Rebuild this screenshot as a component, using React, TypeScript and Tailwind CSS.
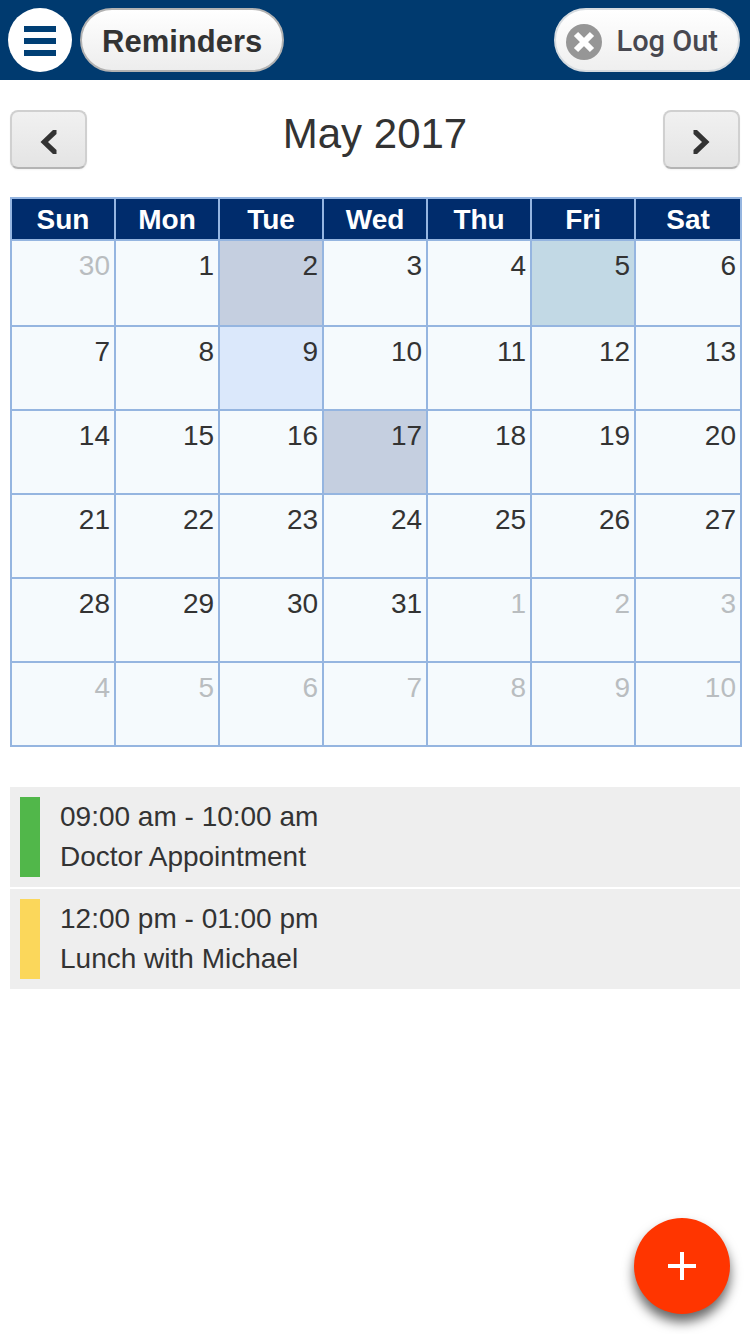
import { useState } from 'react';
import clsx from 'clsx';

const WEEKDAYS = ['Sun', 'Mon', 'Tue', 'Wed', 'Thu', 'Fri', 'Sat'];

// May 2017, padded with the days around it
const WEEKS = [
  [30, 1, 2, 3, 4, 5, 6],
  [7, 8, 9, 10, 11, 12, 13],
  [14, 15, 16, 17, 18, 19, 20],
  [21, 22, 23, 24, 25, 26, 27],
  [28, 29, 30, 31, 1, 2, 3],
  [4, 5, 6, 7, 8, 9, 10],
];

const REMINDERS = [
  { time: '09:00 am - 10:00 am', title: 'Doctor Appointment', color: 'bg-[#51b74a]' },
  { time: '12:00 pm - 01:00 pm', title: 'Lunch with Michael', color: 'bg-[#fbd75b]' },
];

const BUSY_DAYS = [2, 17];
const TODAY = 9;

function isOutside(week: number, day: number) {
  return (week === 0 && day > 7) || (week > 3 && day < 15);
}

function dayColor(day: number, outside: boolean, selected: number) {
  if (outside) return 'bg-[#f5fafd]';
  if (day === selected) return 'bg-[#c2d9e5]';
  if (day === TODAY) return 'bg-[#dbe8fb]';
  if (BUSY_DAYS.includes(day)) return 'bg-[#c5cfe0]';
  return 'bg-[#f5fafd]';
}

function Header() {
  return (
    <header className="flex items-center gap-2 bg-[#003a6f] py-2 pr-[10px] pl-2">
      <button aria-label="Menu" className="flex size-16 items-center justify-center rounded-full bg-white">
        <svg viewBox="0 0 32 32" className="size-8" fill="#003f75">
          <path d="M0 2h32v6H0zM0 14h32v6H0zM0 26h32v6H0z" />
        </svg>
      </button>
      <button className="h-16 rounded-full border-2 border-[#b2b2b2] bg-linear-to-b from-white to-[#ededed] px-5 pt-1 text-[31px] font-bold text-[#333]">
        Reminders
      </button>
      <button className="ml-auto flex h-16 items-center gap-[14px] rounded-full border-2 border-[#d5dbe0] bg-linear-to-b from-white to-[#efefef] pt-1 pr-5 pl-[10px] font-['Roboto','Liberation_Sans',sans-serif] text-[29px] font-medium text-[#484850]">
        <svg viewBox="0 0 36 36" className="size-9">
          <circle cx="18" cy="18" r="18" fill="#969696" />
          <path d="M10 10l16 16M26 10L10 26" stroke="#fff" strokeWidth="6" />
        </svg>
        Log Out
      </button>
    </header>
  );
}

function NavButton({ label, path }: { label: string; path: string }) {
  return (
    <button
      aria-label={label}
      className="flex h-[59px] w-[77px] items-center justify-center rounded-lg border-2 border-[#d0d0d0] border-b-[#b4b4b4] bg-linear-to-b from-[#f1f1f1] to-[#e4e4e4] shadow-xs"
    >
      <svg viewBox="0 0 24 32" className="h-8 w-6" fill="#333">
        <path d={path} />
      </svg>
    </button>
  );
}

function Calendar({ selected, onSelect }: { selected: number; onSelect: (day: number) => void }) {
  return (
    <table className="w-full table-fixed border-collapse text-[28px] leading-8">
      <thead>
        <tr className="h-[42px]">
          {WEEKDAYS.map((name) => (
            <th
              key={name}
              scope="col"
              className="w-[14.25%] border-2 border-[#95b5e0] bg-[#002c6c] p-0 pt-0.5 font-bold text-white last:w-auto"
            >
              {name}
            </th>
          ))}
        </tr>
      </thead>
      <tbody>
        {WEEKS.map((days, week) => (
          <tr key={week} className="h-[84px] first:h-[86px]">
            {days.map((day) => {
              const outside = isOutside(week, day);
              return (
                <td
                  key={day}
                  onClick={() => !outside && onSelect(day)}
                  className={clsx(
                    'border-2 border-[#95b5e0] px-1 pt-[9px] text-right align-top',
                    dayColor(day, outside, selected),
                    outside ? 'text-[#b9bdc0]' : 'text-[#333]',
                  )}
                >
                  {day}
                </td>
              );
            })}
          </tr>
        ))}
      </tbody>
    </table>
  );
}

export default function App() {
  const [selected, setSelected] = useState(5);

  return (
    <div className="min-h-screen bg-white font-['Liberation_Sans',Arial,sans-serif] text-[#333]">
      <Header />

      <main>
        <div className="flex items-start justify-between px-[10px] pt-[30px]">
          <NavButton label="Previous month" path="M16 6h3.500v4L11 18l8.500 8v4H16L3.500 18z" />
          <h1 className="text-[42px] leading-12">May 2017</h1>
          <NavButton label="Next month" path="M8 6H4.500v4L13 18l-8.500 8v4H8L20.500 18z" />
        </div>

        <div className="pt-7 pr-2 pl-[10px]">
          <Calendar selected={selected} onSelect={setSelected} />
        </div>

        <ul className="mt-10 space-y-0.5 px-[10px] text-[28px] leading-10">
          {REMINDERS.map((item) => (
            <li key={item.title} className="flex gap-5 bg-[#eee] p-[10px]">
              <span className={clsx('w-5', item.color)} />
              <div>
                <p>{item.time}</p>
                <p>{item.title}</p>
              </div>
            </li>
          ))}
        </ul>
      </main>

      {/* Add reminder */}
      <button
        aria-label="Add reminder"
        className="fixed right-5 bottom-5 flex size-24 items-center justify-center rounded-full bg-[#ff3500] shadow-[0_8px_12px_rgba(0,0,0,0.6)]"
      >
        <svg viewBox="0 0 28 28" className="size-7" stroke="#fff" strokeWidth="4">
          <path d="M14 0v28M0 14h28" />
        </svg>
      </button>
    </div>
  );
}
